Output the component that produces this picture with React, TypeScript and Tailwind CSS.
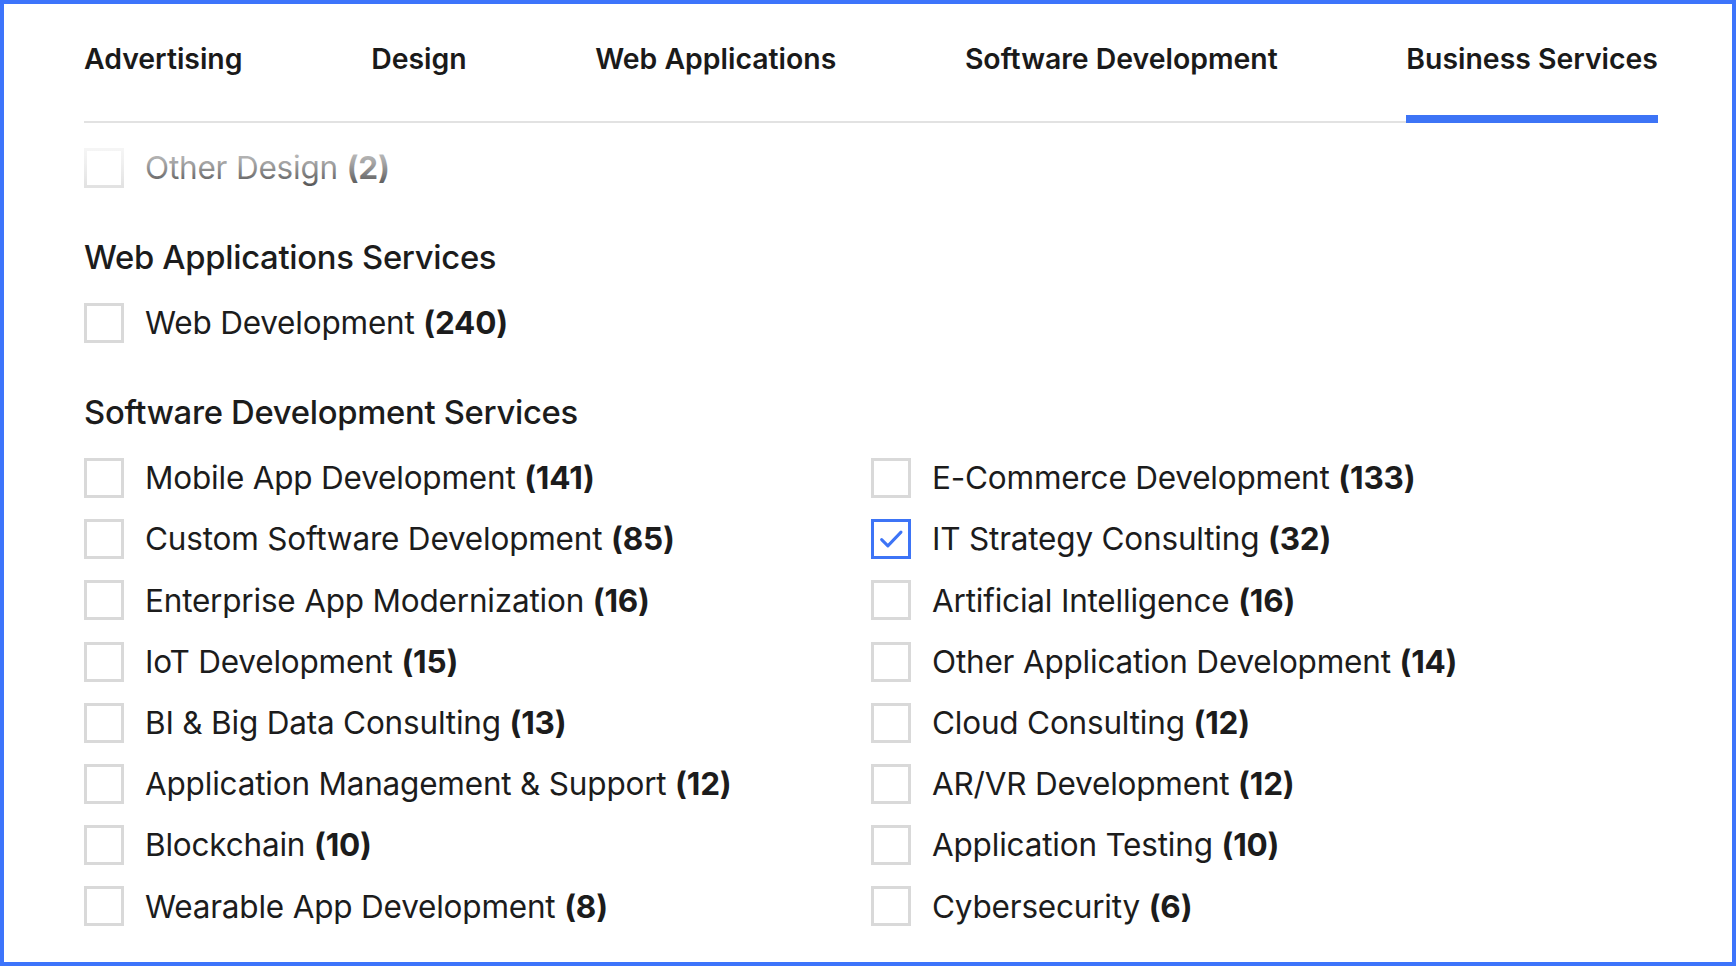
const tabs = [
  "Advertising",
  "Design",
  "Web Applications",
  "Software Development",
  "Business Services",
];

const software: [string, number, boolean][] = [
  ["Mobile App Development", 141, false],
  ["E-Commerce Development", 133, false],
  ["Custom Software Development", 85, false],
  ["IT Strategy Consulting", 32, true],
  ["Enterprise App Modernization", 16, false],
  ["Artificial Intelligence", 16, false],
  ["IoT Development", 15, false],
  ["Other Application Development", 14, false],
  ["BI & Big Data Consulting", 13, false],
  ["Cloud Consulting", 12, false],
  ["Application Management & Support", 12, false],
  ["AR/VR Development", 12, false],
  ["Blockchain", 10, false],
  ["Application Testing", 10, false],
  ["Wearable App Development", 8, false],
  ["Cybersecurity", 6, false],
];

function Checkbox({ checked }: { checked?: boolean }) {
  return (
    <span
      className={
        checked
          ? "flex h-[40px] w-[40px] shrink-0 items-center justify-center border-[3px] border-[#3d74f6]"
          : "flex h-[40px] w-[40px] shrink-0 items-center justify-center border-[3px] border-[#d9d9d9]"
      }
    >
      {checked && (
        <svg viewBox="0 0 24 24" className="h-[30px] w-[30px]" fill="none">
          <path
            d="M4.5 12.5l5 5L20 6.5"
            stroke="#3d74f6"
            strokeWidth="2.4"
            strokeLinecap="round"
            strokeLinejoin="round"
          />
        </svg>
      )}
    </span>
  );
}

function Item({ label, count, checked }: { label: string; count: number; checked?: boolean }) {
  return (
    <label className="flex h-[40px] items-center gap-[21px]">
      <Checkbox checked={checked} />
      <span className="text-[31.5px] leading-none tracking-[-0.2px] text-[#1c1c1c] whitespace-nowrap">
        {label} <span className="font-bold">({count})</span>
      </span>
    </label>
  );
}

export default function App() {
  return (
    <div
      className="h-screen w-full overflow-hidden border-4 border-[#3d74fb] bg-white"
      style={{ fontFamily: "Inter, 'Noto Sans', sans-serif" }}
    >
      <div className="pl-[80px] pr-[74px]">
        {/* tabs */}
        <div className="flex justify-between border-b-2 border-[#e2e2e2]">
          {tabs.map((t) => (
            <div
              key={t}
              className={
                t === "Business Services"
                  ? "-mb-[2px] border-b-8 border-[#3d74f6] pt-[39px] pb-[40px] text-[28.4px] leading-[32px] font-semibold text-[#1a1a1a]"
                  : "-mb-[2px] border-b-8 border-transparent pt-[39px] pb-[40px] text-[28.4px] leading-[32px] font-semibold text-[#1a1a1a]"
              }
            >
              {t}
            </div>
          ))}
        </div>

        {/* scroll area */}
        <div className="relative pt-[25px]">
          <div className="pointer-events-none absolute left-0 right-0 top-0 h-[80px] bg-gradient-to-b from-white via-white/60 to-white/0" />

          <Item label="Other Design" count={2} />

          <h3 className="mt-[51px] mb-[28px] text-[32.8px] leading-[36px] font-medium tracking-[-0.3px] text-[#1c1c1c]">
            Web Applications Services
          </h3>
          <Item label="Web Development" count={240} />

          <h3 className="mt-[51px] mb-[28px] text-[32.8px] leading-[36px] font-medium tracking-[-0.3px] text-[#1c1c1c]">
            Software Development Services
          </h3>
          <div className="grid grid-cols-2 gap-y-[21.2px]">
            {software.map(([label, count, checked]) => (
              <Item key={label} label={label} count={count} checked={checked} />
            ))}
          </div>
        </div>
      </div>
    </div>
  );
}
